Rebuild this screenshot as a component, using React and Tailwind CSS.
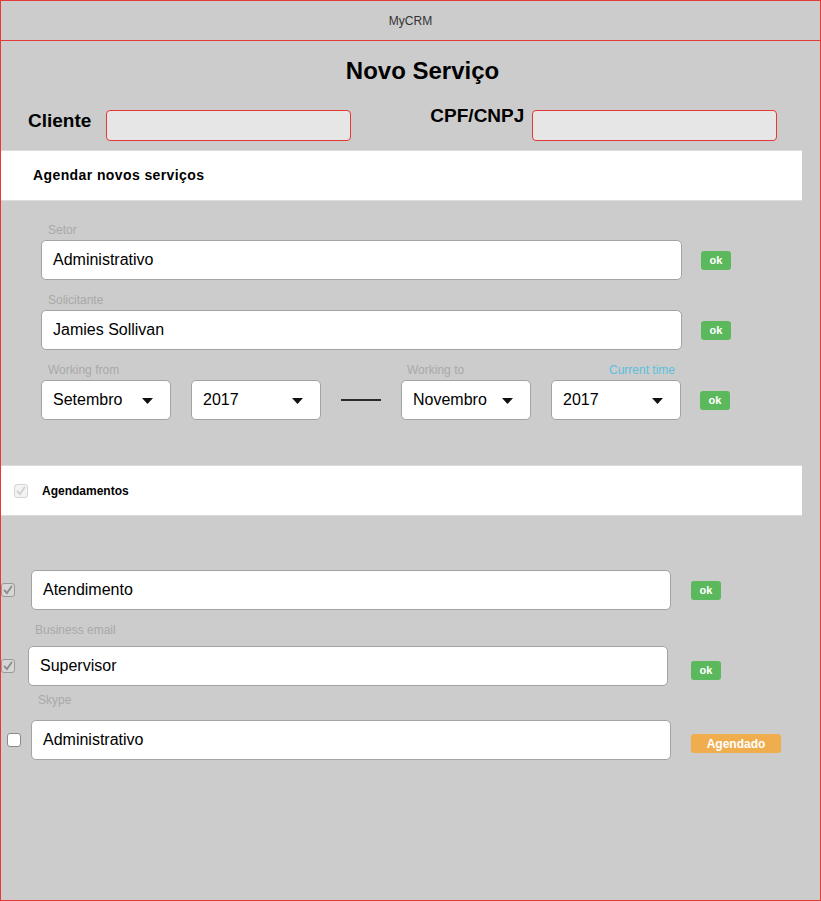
import React from "react";

const font = { fontFamily: '"Liberation Sans", Arial, sans-serif' };

function Check({ checked, tone = "dark", className = "" }) {
  const box =
    tone === "light"
      ? "border-[#d4d4d4] bg-[#f3f3f3]"
      : checked
      ? "border-[#9a9a9a] bg-[#d6d6d6]"
      : "border-[#8a8a8a] bg-white";
  const mark = tone === "light" ? "#d0d0d0" : "#8c8c8c";
  return (
    <div className={`w-[14px] h-[14px] rounded-[3px] border flex items-center justify-center shrink-0 ${box} ${className}`}>
      {checked && (
        <svg width="10" height="10" viewBox="0 0 10 10">
          <path d="M1.5 5.5 L4 8 L8.5 1.5" fill="none" stroke={mark} strokeWidth="1.8" strokeLinecap="round" />
        </svg>
      )}
    </div>
  );
}

function Ok({ className = "" }) {
  return (
    <div className={`w-[30px] h-[19px] rounded-[3px] bg-[#5cb85c] text-white text-[11px] font-bold flex items-center justify-center shrink-0 ${className}`}>
      ok
    </div>
  );
}

function Field({ value, w = "w-[641px]" }) {
  return (
    <div className={`${w} h-[40px] bg-white border border-[#a3a3a3] rounded-[5px] flex items-center pl-[11px] text-[16px] text-black shrink-0`}>
      {value}
    </div>
  );
}

function Select({ value }) {
  return (
    <div className="w-[130px] h-[40px] bg-white border border-[#a3a3a3] rounded-[5px] flex items-center pl-[11px] text-[16px] text-black shrink-0 relative">
      {value}
      <svg className="absolute left-[100px] top-[17px]" width="11" height="6" viewBox="0 0 11 6">
        <path d="M0 0 L11 0 L5.5 6 Z" fill="#111" />
      </svg>
    </div>
  );
}

function Label({ children, className = "" }) {
  return <div className={`h-[14px] leading-[14px] text-[12px] text-[#a9a9a9] ${className}`}>{children}</div>;
}

export default function App() {
  return (
    <div style={font} className="w-[821px] h-[901px] bg-[#cccccc] border border-[#e53935] overflow-hidden">
      <div className="h-[40px] border-b border-[#e53935] flex items-center justify-center text-[12px] text-[#333]">
        MyCRM
      </div>

      <div className="pt-[15px] h-[45px] pl-[24px] text-center text-[24px] leading-[30px] font-bold text-black">
        Novo Serviço
      </div>

      <div className="mt-[24px] flex items-start h-[30px]">
        <div className="ml-[27px] mt-[1px] text-[19px] font-bold leading-[20px] text-black">Cliente</div>
        <div className="ml-[15px] w-[245px] h-[31px] bg-[#e6e6e6] border border-[#e53935] rounded-[4px]" />
        <div className="ml-[79px] mt-[-4px] text-[19px] font-bold leading-[20px] text-black">CPF/CNPJ</div>
        <div className="ml-[8px] w-[245px] h-[31px] bg-[#e6e6e6] border border-[#e53935] rounded-[4px]" />
      </div>

      <div className="mt-[10px] w-[801px] h-[51px] bg-white border-y border-[#dcdcdc] flex items-center pl-[32px] text-[14px] font-bold tracking-[0.4px] text-black">
        Agendar novos serviços
      </div>

      <div className="pl-[40px]">
        <Label className="mt-[22px] pl-[7px]">Setor</Label>
        <div className="mt-[3px] flex items-center">
          <Field value="Administrativo" />
          <Ok className="ml-[19px]" />
        </div>

        <Label className="mt-[13px] pl-[7px]">Solicitante</Label>
        <div className="mt-[3px] flex items-center">
          <Field value="Jamies Sollivan" />
          <Ok className="ml-[19px]" />
        </div>

        <div className="mt-[13px] flex w-[641px]">
          <Label className="pl-[7px] w-[360px]">Working from</Label>
          <Label className="pl-[6px] flex-1">Working to</Label>
          <div className="h-[14px] leading-[14px] text-[12px] text-[#5bc0de] pr-[7px]">Current time</div>
        </div>
        <div className="mt-[3px] flex items-center">
          <Select value="Setembro" />
          <div className="ml-[20px]"><Select value="2017" /></div>
          <div className="ml-[20px] w-[40px] h-[2px] bg-[#2a2a2a]" />
          <div className="ml-[20px]"><Select value="Novembro" /></div>
          <div className="ml-[20px]"><Select value="2017" /></div>
          <Ok className="ml-[19px]" />
        </div>
      </div>

      <div className="mt-[45px] w-[801px] h-[51px] bg-white border-y border-[#dcdcdc] flex items-center">
        <Check checked tone="light" className="ml-[13px]" />
        <div className="ml-[14px] text-[12px] font-bold text-black">Agendamentos</div>
      </div>

      <div className="mt-[54px] flex items-center">
        <Check checked className="ml-0" />
        <div className="ml-[16px]"><Field value="Atendimento" w="w-[640px]" /></div>
        <Ok className="ml-[20px]" />
      </div>

      <Label className="mt-[13px] pl-[34px]">Business email</Label>
      <div className="mt-[9px] flex items-center">
        <Check checked className="ml-0" />
        <div className="ml-[13px]"><Field value="Supervisor" w="w-[640px]" /></div>
        <Ok className="ml-[23px] mt-[9px]" />
      </div>

      <Label className="mt-[7px] pl-[37px]">Skype</Label>
      <div className="mt-[13px] flex items-center">
        <Check className="ml-[6px]" />
        <div className="ml-[10px]"><Field value="Administrativo" w="w-[640px]" /></div>
        <div className="ml-[20px] mt-[7px] w-[90px] h-[19px] rounded-[3px] bg-[#f0ad4e] text-white text-[12px] font-bold flex items-center justify-center">
          Agendado
        </div>
      </div>
    </div>
  );
}
